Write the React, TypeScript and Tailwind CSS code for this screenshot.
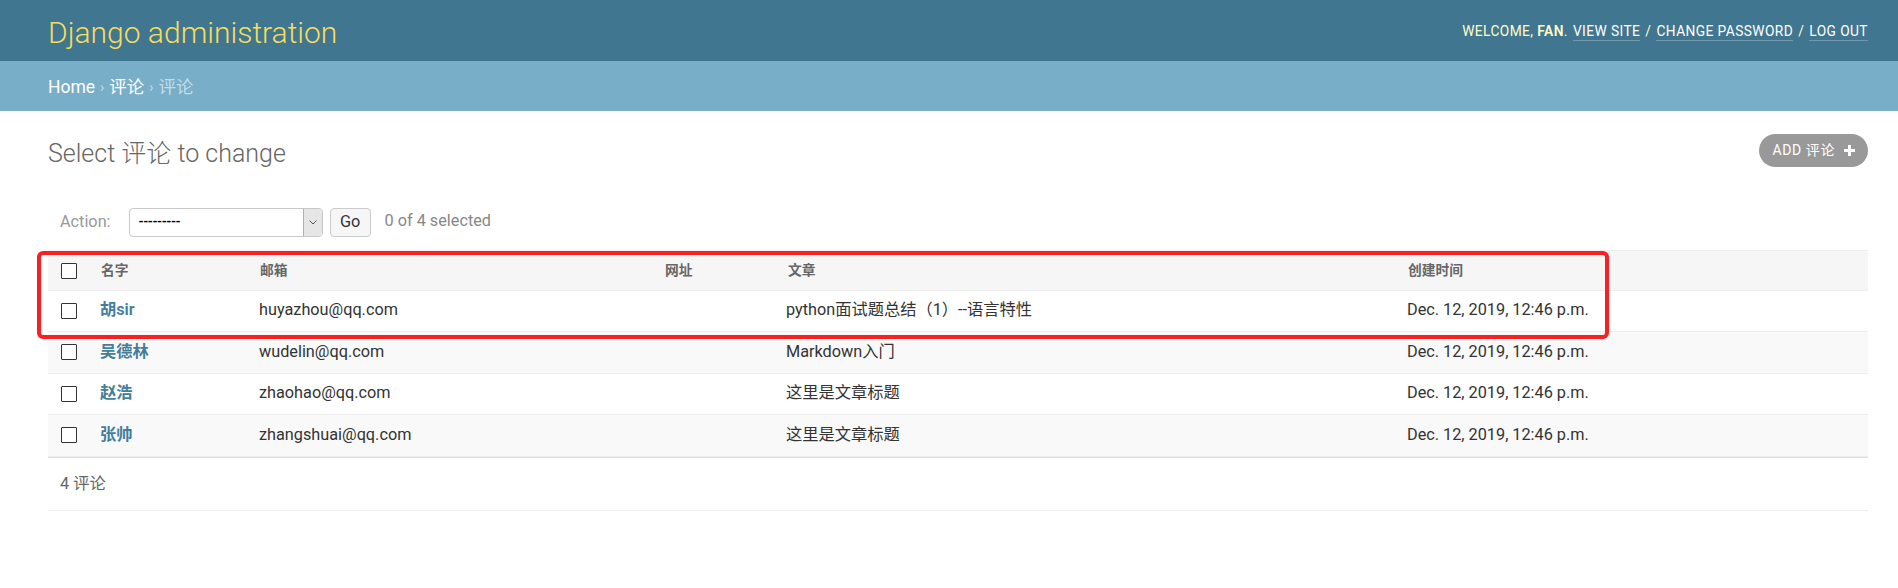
import React from "react";

const rows = [
  { name: "胡sir", email: "huyazhou@qq.com", article: "python面试题总结（1）--语言特性" },
  { name: "吴德林", email: "wudelin@qq.com", article: "Markdown入门" },
  { name: "赵浩", email: "zhaohao@qq.com", article: "这里是文章标题" },
  { name: "张帅", email: "zhangshuai@qq.com", article: "这里是文章标题" },
];

const date = "Dec. 12, 2019, 12:46 p.m.";
const rowHeights = ["h-[41px]", "h-[42px]", "h-[41px]", "h-[42px]"];

function Checkbox() {
  return <span className="block w-[16px] h-[16px] border border-[#333] bg-white rounded-[1px]" />;
}

function Header() {
  return (
    <div>
      <div className="h-[61px] bg-[#417690] flex items-center justify-between pl-[48px] pr-[30px]">
        <h1 className="mt-[4px] text-[30px] font-light text-[#f5dd5d] leading-none">Django administration</h1>
        <div className="mt-[2px] text-[13.75px] uppercase tracking-[0.42px] text-[#ffc] flex items-center gap-[5px]">
          <span>
            Welcome, <strong className="font-semibold">fan</strong>.
          </span>
          <a className="text-white border-b border-white/25 leading-[18px]">View site</a>
          <span>/</span>
          <a className="text-white border-b border-white/25 leading-[18px]">Change password</a>
          <span>/</span>
          <a className="text-white border-b border-white/25 leading-[18px]">Log out</a>
        </div>
      </div>
      <div className="h-[50px] bg-[#79aec8] flex items-center pl-[48px] pt-[3px] text-[17.5px] text-[#c4dce8]">
        <a className="text-white">Home</a>
        <span className="mx-[5px] text-[14px]">›</span>
        <a className="text-white">评论</a>
        <span className="mx-[5px] text-[14px]">›</span>
        <span>评论</span>
      </div>
    </div>
  );
}

function ActionBar() {
  return (
    <div className="flex items-center h-[30px] pl-[12px] text-[16.25px] text-[#999]">
      <span>Action:</span>
      <div className="ml-[18px] w-[194px] h-[29px] border border-[#c8c8c8] rounded-[4px] bg-white flex items-center overflow-hidden">
        <span className="flex-1 pl-[9px] text-[13px] font-bold text-black tracking-[-0.5px]">---------</span>
        <span className="w-[19px] h-full bg-[#e6e6e6] border-l border-[#b0b0b0] flex items-center justify-center">
          <svg width="8" height="5" viewBox="0 0 8 5" fill="none" stroke="#555" strokeWidth="1">
            <path d="M0.5 0.5 L4 4 L7.5 0.5" />
          </svg>
        </span>
      </div>
      <button className="ml-[7px] w-[41px] h-[29px] border border-[#ccc] rounded-[4px] bg-[#f6f6f6] text-[16.25px] text-[#333]">
        Go
      </button>
      <span className="ml-[14px] -mt-[2px] text-[#888]">0 of 4 selected</span>
    </div>
  );
}

function ResultTable() {
  const cols = "grid grid-cols-[40px_159px_406px_121px_621px_1fr]";
  return (
    <div className="relative mt-[13px]">
      <div className={`${cols} h-[41px] bg-[#f6f6f6] border-t border-b border-[#eee] items-center text-[13.75px] font-semibold text-[#666]`}>
        <div className="pl-[13px]">
          <Checkbox />
        </div>
        <div className="pl-[13px]">名字</div>
        <div className="pl-[13px]">邮箱</div>
        <div className="pl-[12px]">网址</div>
        <div className="pl-[14px]">文章</div>
        <div className="pl-[13px]">创建时间</div>
      </div>
      {rows.map((r, i) => (
        <div
          key={i}
          className={`${cols} ${rowHeights[i]} pb-[1px] border-b border-[#eee] items-center text-[16.25px] text-[#333] ${i % 2 === 1 ? "bg-[#f9f9f9]" : "bg-white"}`}
        >
          <div className="pl-[13px]">
            <Checkbox />
          </div>
          <div className="pl-[12px] font-semibold text-[#447e9b]">{r.name}</div>
          <div className="pl-[12px]">{r.email}</div>
          <div className="pl-[12px]"></div>
          <div className="pl-[12px]">{r.article}</div>
          <div className="pl-[12px]">{date}</div>
        </div>
      ))}
      <div className="h-[54px] border-t border-[#ddd] border-b border-b-[#eee] flex items-center pl-[12px] text-[16.25px] text-[#666]">
        4 评论
      </div>
      {/* annotation overlay */}
      <div className="absolute left-[-11px] top-[1px] w-[1572px] h-[88px] border-[4px] border-[#fb1f1f] rounded-[6px] pointer-events-none" />
    </div>
  );
}

export default function App() {
  return (
    <div
      className="w-[1898px] h-[588px] bg-white overflow-hidden"
      style={{ fontFamily: 'Roboto, "Noto Sans CJK SC", "Liberation Sans", sans-serif' }}
    >
      <Header />
      <div className="pl-[48px] pr-[30px] pt-[23px]">
        <div className="flex items-start justify-between">
          <h1 className="mt-[5px] text-[25px] leading-[30px] font-light text-[#666]">Select 评论 to change</h1>
          <a className="h-[33px] px-[13px] rounded-full bg-[#999] text-white text-[14px] tracking-[0.6px] flex items-center gap-[9px]">
            ADD 评论
            <svg width="11" height="11" viewBox="0 0 11 11">
              <path d="M5.5 0 V11 M0 5.5 H11" stroke="white" strokeWidth="3" />
            </svg>
          </a>
        </div>
        <div className="mt-[38px]">
          <ActionBar />
        </div>
        <ResultTable />
      </div>
    </div>
  );
}
